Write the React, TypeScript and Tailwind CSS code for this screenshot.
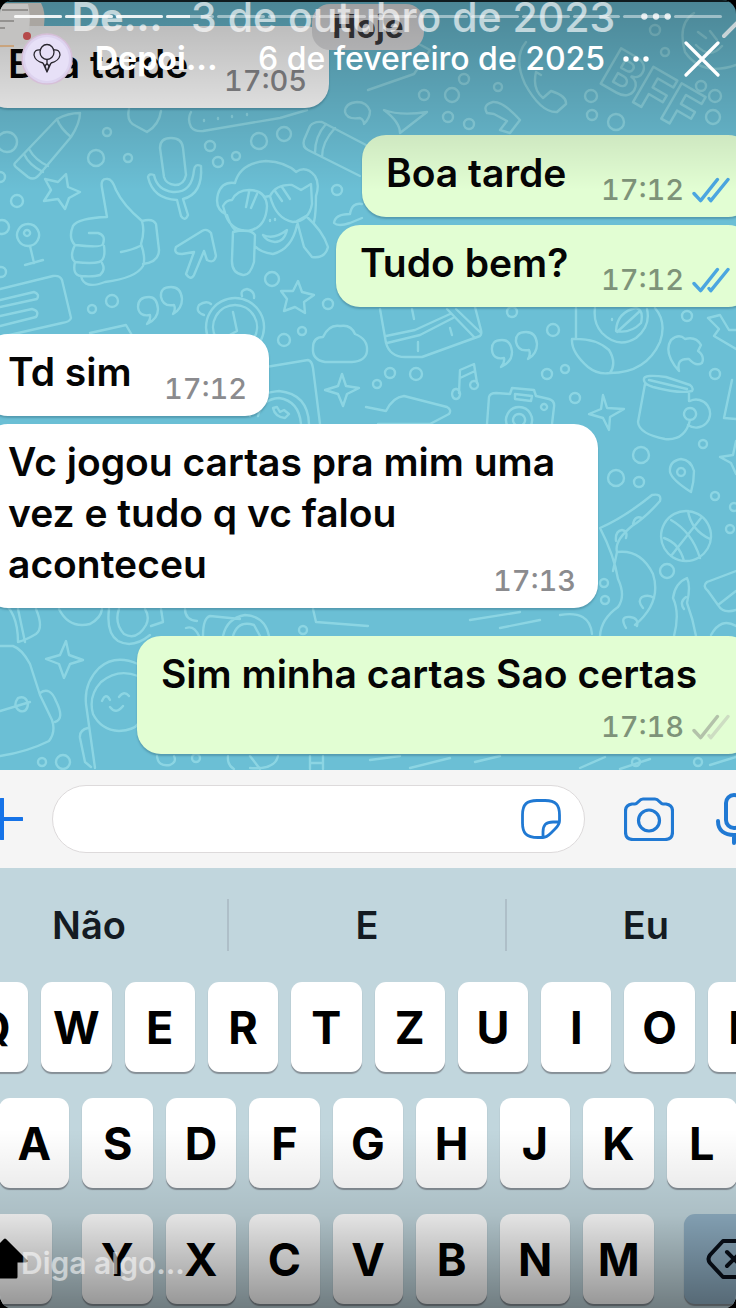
import React from 'react';

type Status = 'read' | 'sent';

interface MessageProps {
  text: string;
  time: string;
  status?: Status;
  stacked?: boolean;
  className?: string;
}

function Ticks({ status }: { status: Status }) {
  const read = status === 'read';
  return (
    <svg
      viewBox="0 0 38 26"
      className="h-[26px] w-[38px] shrink-0"
      fill="none"
      strokeWidth="3.4"
      strokeLinecap="round"
      strokeLinejoin="round"
      aria-hidden="true"
    >
      <path d="M17 21.5 18.8 23.6 36 2.5" stroke={read ? '#4ba6e0' : '#cdddc2'} />
      <path d="M2 16.5 8.6 23.6 25.4 2.5" stroke={read ? '#4ba6e0' : '#b3c2aa'} />
    </svg>
  );
}

function Message({ text, time, status, stacked, className = '' }: MessageProps) {
  const outgoing = status !== undefined;
  return (
    <article
      className={`grid rounded-[24px] pr-[22px] pt-3 pb-[9px] pl-6 shadow-[0_2px_2px_rgba(40,90,110,0.35)] ${
        outgoing ? '-mr-4 self-end bg-[#e2fed3]' : '-ml-4 self-start bg-white'
      } ${className}`}
    >
      <p
        className={`col-start-1 row-start-1 mb-[10px] text-[39px] leading-[51px] font-semibold text-[#050505] ${
          stacked ? 'pr-6' : ''
        }`}
      >
        {text}
      </p>
      <div
        className={`col-start-1 flex items-center gap-[8px] self-end justify-self-end ${
          stacked ? 'row-start-2' : 'row-start-1'
        }`}
      >
        <time
          className={`text-[29px] leading-9 font-medium tabular-nums ${outgoing ? 'text-[#7e9379]' : 'text-[#8b8b8e]'}`}
        >
          {time}
        </time>
        {status && <Ticks status={status} />}
      </div>
    </article>
  );
}

const bubbles: [number, number, number][] = [
  [107, 132, 4], [96, 158, 8], [128, 158, 4], [17, 201, 6], [210, 146, 5], [218, 162, 5], [236, 156, 4],
  [259, 141, 8], [284, 134, 7], [337, 190, 5], [272, 279, 7], [328, 304, 5], [112, 301, 6], [92, 309, 4],
  [302, 331, 4], [284, 340, 6], [464, 79, 5], [452, 95, 7], [424, 95, 5], [498, 87, 4], [591, 96, 6],
  [592, 115, 5], [616, 122, 8], [701, 86, 5], [715, 96, 6], [713, 117, 7], [655, 30, 5], [665, 52, 4],
  [448, 117, 5], [469, 124, 5], [512, 312, 5], [553, 330, 6], [687, 316, 5], [416, 374, 6], [390, 373, 5],
  [377, 384, 4], [547, 374, 5], [565, 369, 4], [575, 398, 5], [715, 374, 5], [703, 444, 4], [641, 455, 8],
  [616, 478, 8], [639, 482, 5], [715, 496, 4], [730, 529, 4], [667, 571, 7], [604, 583, 4], [605, 600, 4],
  [42, 762, 4], [63, 762, 7], [303, 630, 4], [196, 758, 4], [636, 762, 4], [0, 177, 5], [1, 272, 5],
  [2, 227, 7], [734, 507, 4], [7, 142, 10], [698, 762, 4],
];

const strokes: string[] = [
  // pencil
  'M15 163 57 119Q68 113 80 113Q80 123 71 137L39 175Q34 181 28 177L17 168Q13 165 15 163ZM57 119Q60 128 71 137M24 154Q29 165 43 172M29 149Q35 160 48 166',
  // stars
  'M66 174 68 187 80 192 69 198 65 209 58 199 44 201 51 190 45 179 58 182Z',
  'M298 281 302 292 314 295 304 302 305 313 295 307 284 311 287 299 281 291 293 291Z',
  // microphone
  'M160 148Q160 138 171 138T183 148L186 175Q184 185 175 185Q166 184 164 177ZM148 177Q149 173 154 175Q157 190 173 192Q192 193 194 170Q195 163 201 166Q203 194 183 199L188 215Q185 222 181 216L177 200Q153 199 148 177Z',
  // thumbs up
  'M107 217 102 188Q100 178 108 179Q112 179 116 190Q123 205 142 221Q145 232 141 244Q146 258 143 266Q136 278 105 282Q84 290 81 276Q72 275 75 262Q69 257 75 245Q68 238 73 226Q78 218 107 217ZM89 233H98Q106 235 103 244Q102 248 75 245M104 246Q106 260 99 262Q92 264 75 262M102 263Q106 270 100 275Q94 277 81 276M140 246Q132 250 121 252M142 221Q153 218 156 224L159 250Q159 262 143 264',
  // arrow
  'M202 231Q207 228 211 233L216 256Q214 264 207 260L204 251 194 275Q191 281 186 274L194 252 182 254Q173 254 176 247Z',
  // pin on a stand
  'M28 224a11 11 0 1 0 .1 0ZM27 230a3 3 0 1 0 .1 0ZM30 246 34 263M25 265 43 260',
  // covered-eyes figure
  'M235 183Q240 163 266 161Q286 162 296 172Q306 165 315 176Q320 184 316 196Q316 213 314 222M235 183Q222 181 218 194Q214 209 227 215Q230 225 235 230M296 172 293 169M297 225Q292 249 273 254Q260 252 256 247M223 206Q226 200 232 200Q237 190 249 190Q266 190 267 206Q266 228 248 231Q232 231 226 216ZM270 196Q276 184 292 185L301 190 311 184 312 204Q309 221 293 222Q276 219 270 196ZM264 197 270 196M233 232Q250 228 255 235L254 262Q250 276 243 275Q231 273 232 259ZM297 221 306 216Q323 231 328 247Q325 259 312 257L304 247ZM263 235Q274 240 287 230Q284 242 275 242Q266 241 263 235M249 192 246 207M257 194 251 208M275 191 282 201M282 187 290 199M270 220v1M275 219v1',
  // small cloud at the bubble edge
  'M362 204Q352 202 350 214 335 214 334 223 338 227 350 223L362 218',
  // note
  'M0 289 53 276Q60 275 62 280L71 318Q70 322 62 323L5 336M0 300 34 292Q40 294 37 299L0 307M0 316 32 309Q40 311 36 317L0 326M90 333 126 325 133 337',
  // quotation marks
  'M149 297q-11 0-11 10q1 10 12 8q1 4-3 9q11-5 11-15q-1-12-9-12ZM171 287q-11 0-10 10q2 10 13 8q2 4-1 9q9-5 9-15q-1-12-11-12Z',
  'M502 340q-11 0-10 10q1 10 12 8q1 4-3 9q11-5 11-15q-1-12-10-12ZM526 332q-11 0-10 10q2 10 13 8q2 4-1 9q9-5 9-15q-1-12-11-12Z',
  // alarm clock
  'M235 298a29 29 0 1 0 .1 0ZM235 305a22 22 0 1 0 .1 0ZM233 312 237 331 226 337M204 315Q195 312 199 305 206 300 211 304M242 296Q240 290 247 289 255 291 254 298',
  // heart tip, remote and eraser
  'M129 109Q126 122 136 126L147 132Q159 125 161 111M191 112Q187 119 191 127 195 132 203 131L280 118 307 110M204 120v1M218 118v1M232 116v1M247 114v1',
  'M304 140 310 126Q314 121 322 122L366 145M304 140Q302 147 308 150L360 176M315 153Q315 136 326 124M322 157Q322 142 335 128',
  // telephone, envelope and paper plane
  'M526 42Q513 58 525 84 541 113 557 112L566 104Q567 96 551 91L543 98Q532 89 536 72L541 75M368 90 414 74 430 50 380 23M384 110Q400 116 427 112L400 133Q400 122 384 110Z',
  'M357 102Q345 103 345 112 347 120 360 118 364 120 364 124 370 118 370 111 367 102 357 102ZM487 113Q482 105 493 102 503 101 520 120L510 133 500 130 507 121 494 114Z',
  // smiling face
  'M694 13Q677 24 685 52 702 77 736 65M698 32l8 6M710 31l7 9M696 45Q710 60 722 46',
  // gift
  'M380 309 386 343Q390 357 405 357H422L480 336Q482 334 481 330L475 307M386 336 415 330 450 314M387 343 420 335 453 318M412 309 414 319M447 309 475 338M456 309 481 333M418 342v9M450 328 452 335',
  // music, cloud, camera
  'M456 389a4 5 0 1 0 .1 0M459 393 460 370 474 364 477 383M460 378 475 371M474 381a4 4 0 1 0 .1 0',
  'M313 348Q313 337 323 337 329 324 340 326 351 324 355 334 368 339 367 351 366 361 352 362H325Q312 360 313 348Z',
  'M366 407 386 411Q393 397 404 396L447 407Q452 410 449 414L430 424H378M487 424 489 397Q490 393 496 393L510 394 512 388 534 390 536 396 549 399Q555 401 554 407L552 424M519 407a13 13 0 1 0 .1 0ZM519 414a6 6 0 1 0 .1 0ZM515 394 532 396 531 401 515 399ZM544 404a3 3 0 1 0 .1 0',
  // handset in a speech bubble
  'M250 416Q252 393 279 391 308 394 309 424M258 416Q262 399 279 398 299 401 301 424M260 368 308 360Q312 361 313 368L320 424M273 408q2 9 12 10l4-4-5-4-4 2-3-5Z',
  // sparkles
  'M603 395 607 408 624 409 610 417 609 430 603 418 589 414 601 409Z',
  'M66 641 69 655 83 660 70 664 64 678 59 664 46 659 60 655Z',
  'M342 374 346 386 359 388 347 394 343 406 338 394 325 390 338 386Z',
  'M736 441 733 455 720 457 731 463 736 474',
  // bird and cloud scribble
  'M576 308V339M572 339Q571 352 588 367 598 375 610 373 617 363 609 350 596 338 572 339M610 373Q646 373 660 342 667 322 655 308M595 308Q593 323 602 333 618 349 636 338 651 326 647 309M616 331Q617 312 636 308 644 310 641 323 630 334 616 331ZM617 332 640 311M612 319v1M679 371Q663 353 671 340 679 333 685 339 696 336 701 345L698 351Q705 356 702 363 696 367 689 359 676 358 679 371ZM708 318 720 315 729 330H736M708 318 719 329 714 336 736 349',
  // mug
  'M644 379Q644 374 666 377L690 385Q694 388 692 391 680 394 653 387 643 384 644 379ZM645 384 638 422Q639 434 665 439 685 441 690 420M689 392V401M690 401a14 14 0 1 1-2 24M690 408a6 6 0 1 0 .1 0ZM649 380 687 389M732 380 724 418 736 419',
  // map pin
  'M681 459Q669 461 670 472 672 480 691 492 694 482 694 471 691 460 681 459ZM681 468a4 4 0 1 0 .1 0Z',
  // basketball
  'M686 511a25 25 0 1 0 .1 0ZM671 520Q692 532 700 558M688 511Q691 530 710 539M701 518 671 556M664 538Q679 543 684 561',
  // branches
  'M600 528Q625 517 652 495 662 493 660 501 645 518 632 526 614 541 617 552M617 552Q641 549 653 574 662 602 635 625M600 528Q614 555 618 579 626 596 618 607 601 619 600 636M617 552 613 571M616 541Q615 531 622 530 628 531 626 538M633 524Q635 515 642 518M643 608Q637 601 642 597 649 594 654 598M626 628Q619 616 630 617 639 618 637 626M674 636Q680 613 673 598 675 583 687 578 691 586 687 603 693 619 696 636M686 597Q679 602 684 609M707 582 736 571M707 582Q702 586 708 591L718 605 736 591M718 605Q723 614 736 610M711 635Q721 617 736 626',
  // backpack
  'M0 600Q18 611 18 642 26 640 36 634 44 628 36 609M18 609 25 642M0 646H13Q22 649 30 664L40 695 52 720Q56 732 49 741 27 752 0 756M0 711 30 702M18 698q8-3 10 6q-1 9-8 7q-8-5-2-13M40 693Q50 686 56 701 65 719 55 722M59 609Q69 629 90 624 101 618 102 609M109 609Q106 633 118 641 133 649 150 635M119 609Q114 623 124 634 137 641 146 625 150 617 145 609M161 609 163 622 151 626',
  // astronaut
  'M138 664Q115 654 99 668 84 683 86 704L95 768M138 676Q118 668 101 682 88 696 93 714 101 730 119 731 134 730 138 724M102 701q4-9 8-1M119 697q5-7 10-1M110 707Q116 715 123 706M88 728Q79 730 80 738L85 762 91 767',
  'M185 609Q185 620 197 621M186 628Q194 625 199 636M203 636Q203 618 210 616L240 619M223 636Q227 618 245 615 265 616 269 636M233 636Q238 620 254 625L260 636M313 609 316 622 368 626M470 620 520 612M500 628 540 620M560 615Q590 610 592 634',
  'M157 756Q158 767 170 765 177 762 174 756M228 756Q227 765 234 769M250 756 260 769M250 768Q275 770 278 756M310 756V769M311 763H323M323 756V769M370 760 400 756M410 768 450 758M475 762 500 756M580 768 605 757M620 769 650 759M710 765 736 757',
];

function Wallpaper() {
  return (
    <svg
      className="absolute inset-0 h-full w-full"
      viewBox="0 0 736 770"
      preserveAspectRatio="xMidYMin slice"
      fill="none"
      stroke="#92dae6"
      strokeWidth="2.4"
      strokeLinecap="round"
      strokeLinejoin="round"
      opacity="0.85"
      aria-hidden="true"
    >
      {strokes.map((d) => (
        <path key={d} d={d} />
      ))}
      {bubbles.map(([cx, cy, r]) => (
        <circle key={`${cx}-${cy}`} cx={cx} cy={cy} r={r} />
      ))}
      <text x="598" y="82" transform="rotate(30 598 82)" fontFamily="Inter, sans-serif" fontSize="56" fontWeight="800">
        BFF
      </text>
    </svg>
  );
}

function Composer() {
  return (
    <div className="-mr-4 -ml-[19px] flex h-[98px] items-center bg-[#f5f5f5] text-[#2079d3]">
      <button type="button" aria-label="Anexar" className="shrink-0">
        <svg viewBox="0 0 42 42" className="size-[42px]" fill="none" stroke="#1673e8" strokeWidth="4" strokeLinecap="round">
          <path d="M21 1v40M1 21h40" />
        </svg>
      </button>
      <div className="ml-[29px] flex h-[68px] min-w-0 flex-1 items-center rounded-full border border-[#dddadb] bg-white pr-[23px] pl-6">
        <input type="text" aria-label="Mensagem" className="h-full min-w-0 flex-1 bg-transparent text-[39px] outline-none" />
        <button type="button" aria-label="Figurinhas" className="shrink-0">
          <svg viewBox="0 0 40 40" className="size-10" fill="none" stroke="currentColor" strokeWidth="2.8" strokeLinecap="round" strokeLinejoin="round">
            <path d="M22 38.5H17C5 38.5 1.5 34 1.5 24V16C1.5 5 6 1.5 16 1.5H24C35 1.5 38.5 6 38.5 16V22C38.5 25 37 27 34 30L30 34C27 37 25 38.5 22 38.5ZM22 38.5V33C22 26 25 23 32 23H38.3" />
          </svg>
        </button>
      </div>
      <button type="button" aria-label="Câmera" className="ml-[39px] shrink-0">
        <svg viewBox="0 0 50 44" className="h-11 w-[50px]" fill="none" stroke="currentColor" strokeWidth="3.2" strokeLinejoin="round">
          <path d="M8 7H11C14 7 15 2 19 2H31C35 2 36 7 39 7H42Q48.500 8 48.5 14V35Q48.5 42.5 41 42.5H9Q1.5 42.5 1.5 35V14Q1.5 8 8 7Z" />
          <circle cx="25" cy="23.5" r="10.5" />
        </svg>
      </button>
      <button type="button" aria-label="Gravar áudio" className="ml-[42px] shrink-0">
        <svg viewBox="0 0 36 52" className="h-[52px] w-9" fill="none" stroke="currentColor" strokeWidth="4" strokeLinecap="round">
          <rect x="10" y="2" width="16" height="33" rx="8" />
          <path d="M2 28C2 38 9 42 18 42S34 38 34 28M18 42v8" />
        </svg>
      </button>
    </div>
  );
}

const keyClass =
  'flex h-[90px] items-center justify-center rounded-[11px] bg-white text-[45px] leading-none font-bold text-black shadow-[0_2px_1px_#868f96]';

function Key({ label, grow = false }: { label: string; grow?: boolean }) {
  return (
    <button type="button" className={`${keyClass} ${grow ? 'min-w-0 flex-1' : ''}`}>
      {label}
    </button>
  );
}

function Keyboard() {
  return (
    <section aria-label="Teclado" className="flex flex-col bg-[#c1d6dd] pb-[5px]">
      <div className="-mx-[49px] grid h-[114px] grid-cols-3 items-center divide-x-2 divide-[#aebfc8]">
        {['Não', 'E', 'Eu'].map((word) => (
          <button key={word} type="button" className="h-[52px] text-[38px] leading-none font-semibold text-[#141b22]">
            {word}
          </button>
        ))}
      </div>
      <div className="flex flex-col gap-[26px]">
        <div className="-mx-[42px] grid grid-cols-10 gap-[13px]">
          {'QWERTZUIOP'.split('').map((k) => (
            <Key key={k} label={k} />
          ))}
        </div>
        <div className="-mx-px grid grid-cols-9 gap-[13px]">
          {'ASDFGHJKL'.split('').map((k) => (
            <Key key={k} label={k} />
          ))}
        </div>
        <div className="-mx-[42px] flex gap-[30px]">
          <button type="button" aria-label="Maiúsculas" className={`${keyClass} w-[94px] shrink-0`}>
            <svg viewBox="0 0 46 42" className="h-[42px] w-[46px]" fill="#000" stroke="#000" strokeWidth="3" strokeLinejoin="round">
              <path d="M23 2 44 23H34V39H12V23H2Z" />
            </svg>
          </button>
          <div className="flex min-w-0 flex-1 gap-[13px]">
            {'YXCVBNM'.split('').map((k) => (
              <Key key={k} label={k} grow />
            ))}
          </div>
          <button
            type="button"
            aria-label="Apagar"
            className="flex h-[90px] w-[94px] shrink-0 items-center justify-center rounded-[11px] bg-[#91b1c6] shadow-[0_2px_1px_#868f96]"
          >
            <svg viewBox="0 0 50 40" className="h-10 w-[50px]" fill="none" stroke="#080f1a" strokeWidth="4" strokeLinecap="round" strokeLinejoin="round">
              <path d="M17 2H43Q48 2 48 7V33Q48 38 43 38H17L4 24Q1 20 4 16ZM21 13 35 27M35 13 21 27" />
            </svg>
          </button>
        </div>
      </div>
    </section>
  );
}

function Dots({ className }: { className: string }) {
  return (
    <svg viewBox="0 0 26 6" className={className} fill="currentColor" aria-hidden="true">
      <circle cx="3" cy="3" r="2.7" />
      <circle cx="13" cy="3" r="2.7" />
      <circle cx="23" cy="3" r="2.7" />
    </svg>
  );
}

function PreviousHeader() {
  return (
    <div className="absolute inset-x-0 top-0 h-[52px] text-white/65">
      <svg viewBox="0 0 46 52" className="absolute top-0 left-0 h-[52px] w-[46px]" aria-hidden="true">
        <path d="M0 3H41Q46 12 44 26L0 26Z" fill="#aaa6a1" />
        <path d="M0 4H28Q33 26 24 44L0 48Z" fill="#c3c2c1" />
        <path d="M2 10H28M0 21H14M0 28H5" stroke="#858380" strokeWidth="1.5" />
        <path d="M0 46H14" stroke="#c9a47e" strokeWidth="2" />
        <circle cx="27" cy="36" r="4" fill="#b5494a" />
      </svg>
      <span className="absolute top-[-4px] left-[72px] text-[39px] leading-[42px] font-bold">De...</span>
      <span className="absolute top-[-4px] left-[191px] text-[41px] leading-[42px] font-medium whitespace-nowrap">
        3 de outubro de 2023
      </span>
      <Dots className="absolute top-[13px] left-[640px] h-[7px] w-[32px] text-white/80" />
      <svg viewBox="0 0 14 18" className="absolute top-[21px] right-0 h-[18px] w-[14px]" fill="none" stroke="#c8d3d6" strokeWidth="4" strokeLinecap="round">
        <path d="M2 15 15 2" />
      </svg>
    </div>
  );
}

function Avatar() {
  return (
    <svg viewBox="0 0 52 52" className="size-[52px] shrink-0" fill="none" role="img" aria-label="Foto do perfil">
      <circle cx="26" cy="26" r="25" fill="#ddd3ef" stroke="#d6bfd8" strokeWidth="1.5" />
      <circle cx="26" cy="26" r="22" fill="#e7e0f7" />
      <g stroke="#29262e" strokeWidth="1.3" strokeLinejoin="round">
        <path d="M20 17Q13 16 13 22 14 28 22 30M32 17Q39 16 39 22 38 28 30 30" />
        <ellipse cx="26" cy="19" rx="7" ry="7.5" />
        <path d="M26 27V31M22 30 24 33 26 30.5 28 33 30 30M22 30 26 39 30 30M24 33 26 39 28 33" />
      </g>
    </svg>
  );
}

function StoryOverlay() {
  return (
    <header className="absolute inset-x-0 top-0 text-white">
      <PreviousHeader />
      <div className="relative flex gap-[3px] pt-[15px] pr-[14px] pl-[14px]">
        {Array.from({ length: 14 }, (_, i) => (
          <div key={i} className="h-[3px] flex-1 overflow-hidden rounded-full bg-white/45">
            <div className={i < 3 ? 'h-full w-full bg-white/80' : i === 3 ? 'h-full w-1/2 bg-white/80' : 'hidden'} />
          </div>
        ))}
      </div>
      <div className="relative mt-[15px] flex items-center pr-[16px] pl-[21px]">
        <Avatar />
        <strong className="ml-[22px] w-[163px] text-[32px] leading-[52px] font-bold">Depoi...</strong>
        <span className="text-[32px] leading-[52px] font-medium whitespace-nowrap">6 de fevereiro de 2025</span>
        <button type="button" aria-label="Mais opções" className="ml-[18px]">
          <Dots className="h-[6px] w-[26px]" />
        </button>
        <button type="button" aria-label="Fechar" className="ml-auto">
          <svg viewBox="0 0 36 36" className="size-9" fill="none" stroke="currentColor" strokeWidth="3.2" strokeLinecap="round">
            <path d="M2 2 34 34M34 2 2 34" />
          </svg>
        </button>
      </div>
    </header>
  );
}

export default function App() {
  return (
    <div className="bg-black font-['Inter','Liberation_Sans',sans-serif]">
      <div className="relative overflow-hidden rounded-[14px]">
        <main className="relative overflow-hidden bg-[#6bbfd5] pt-[26px] pb-4">
          <Wallpaper />
          <div className="relative flex flex-col">
            <Message text="Boa tarde" time="17:05" className="w-[345px]" />
            <Message text="Boa tarde" time="17:12" status="read" className="mt-[27px] w-[390px]" />
            <Message text="Tudo bem?" time="17:12" status="read" className="mt-2 w-[416px]" />
            <Message text="Td sim" time="17:12" className="mt-[27px] w-[285px]" />
            <Message text="Vc jogou cartas pra mim uma vez e tudo q vc falou aconteceu" time="17:13" className="mt-2 w-[614px]" />
            <Message text="Sim minha cartas Sao certas" time="17:18" status="sent" stacked className="mt-7 w-[615px]" />
          </div>
          <div className="absolute inset-x-0 top-1 flex justify-center">
            <span className="rounded-[18px] bg-[#e2e2e4] px-5 text-[32px] leading-[46px] font-bold text-[#3c3c40]">Hoje</span>
          </div>
        </main>
        <Composer />
        <Keyboard />
        <div className="pointer-events-none absolute inset-x-0 top-0 h-[190px] bg-linear-to-b from-black/30 to-transparent" />
        <div className="pointer-events-none absolute inset-x-0 bottom-0 h-[180px] bg-[linear-gradient(to_top,rgba(0,0,0,0.42),rgba(0,0,0,0.11)_52%,transparent)]" />
        <div className="absolute inset-x-0 top-0 h-[2px] bg-black/80" />
        <StoryOverlay />
        <label htmlFor="reply" className="sr-only">
          Responder
        </label>
        <input
          id="reply"
          type="text"
          placeholder="Diga algo..."
          className="absolute bottom-[26px] left-[21px] h-10 w-[220px] bg-transparent text-[30px] font-semibold outline-none placeholder:text-white/55"
        />
      </div>
    </div>
  );
}
